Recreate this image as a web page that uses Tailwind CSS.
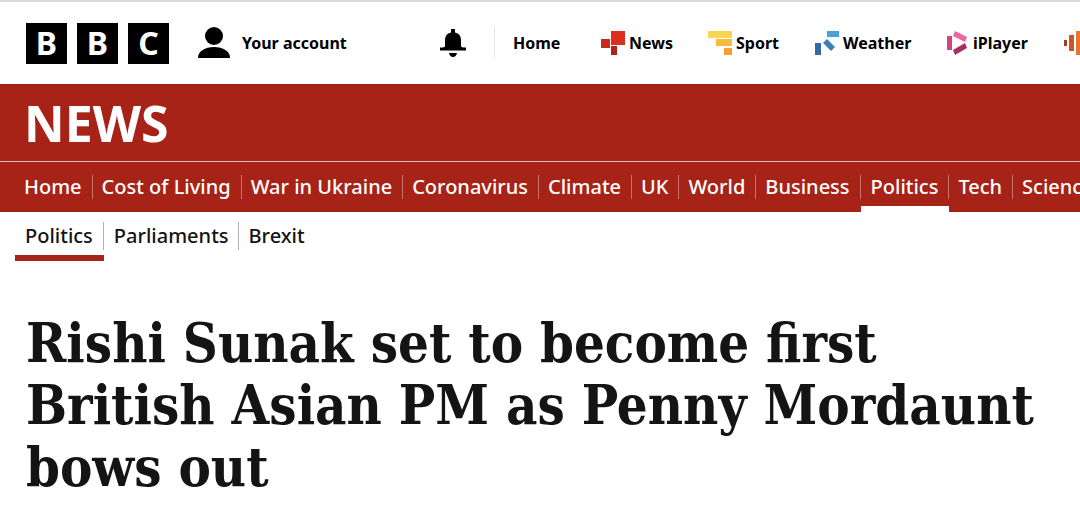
<!DOCTYPE html>
<html lang="en">
<head>
  <meta charset="UTF-8">
  <meta name="viewport" content="width=device-width, initial-scale=1.0">
  <title>Rishi Sunak set to become first British Asian PM - BBC News</title>
  <script src="https://cdn.jsdelivr.net/npm/@tailwindcss/browser@4"></script>
</head>
<body class="bg-white text-[#141414] font-['Noto_Sans',sans-serif] overflow-x-hidden">
  <header class="flex items-center h-21 border-t-2 border-[#dcdcdc] pl-[26px] overflow-hidden whitespace-nowrap text-black text-base font-bold">
    <a href="#" aria-label="BBC" class="flex shrink-0 gap-[10px] text-white text-[32px] leading-none">
      <span class="flex items-center justify-center size-[41px] bg-black">B</span>
      <span class="flex items-center justify-center size-[41px] bg-black">B</span>
      <span class="flex items-center justify-center size-[41px] bg-black">C</span>
    </a>
    <a href="#" class="flex shrink-0 items-center gap-3 ml-[29px] w-[242px]">
      <svg class="w-8 h-8" viewBox="0 0 32 32"><circle cx="16" cy="9" r="9"/><path d="M0 31C0 24 7 20 16 20s16 4 16 11z"/></svg>
      Your account
    </a>
    <button aria-label="Notifications" class="shrink-0 w-[26px] h-7">
      <svg class="w-[26px] h-7" viewBox="0 0 26 28"><path d="M11 0h4v3.500c4 .8 6 3.500 6 8v6l2 1h3v3H0v-3h3l2-1v-6c0-4.500 2-7.200 6-8zM9 24h8c-.5 2.500-2 4-4 4s-3.500-1.500-4-4z"/></svg>
    </button>
    <nav class="flex shrink-0 items-center h-8 ml-7 border-l border-[#e6e6e6]">
      <a href="#" class="w-[106px] pl-[18px]">Home</a>
      <a href="#" class="flex items-center gap-1 w-[107px]">
        <svg class="size-6" viewBox="0 0 24 24"><path fill="#db3020" d="M10 0h14v14H10z"/><path fill="#c72b1f" d="M0 8h9v9H0z"/><path fill="#ab251b" d="M10 15h6v9h-6z"/></svg>
        News
      </a>
      <a href="#" class="flex items-center gap-1 w-[107px]">
        <svg class="size-6" viewBox="0 0 24 24"><path fill="#f8d552" d="M0 0h24v7H0z"/><path fill="#f7b93e" d="M8 8h16v7H8z"/><path fill="#f4a233" d="M16 17h8v7h-8z"/></svg>
        Sport
      </a>
      <a href="#" class="flex items-center gap-1 w-[132px]">
        <svg class="size-6" viewBox="0 0 24 24"><path fill="#499fdc" d="M12 0h12v6H12z"/><path fill="#3a80b5" d="M12 8l8 8-4 4-8-8z"/><path fill="#3468a8" d="M0 12h6v12H0z"/></svg>
        Weather
      </a>
      <a href="#" class="flex items-center gap-[2px] w-[117px]">
        <svg class="size-6" viewBox="0 0 24 24"><path fill="#d34483" d="M0 5h5v14H0z"/><path fill="#ef65a3" d="M8 0l12 6-2 5L6 5z"/><path fill="#a92e65" d="M18 12l2 5-12 7-2-5z"/></svg>
        iPlayer
      </a>
      <a href="#" aria-label="Sounds">
        <svg class="size-6" viewBox="0 0 24 24"><path fill="#a3421a" d="M0 9h3v6H0z"/><path fill="#c9552a" d="M5 4h5v16H5z"/><path fill="#eb7331" d="M12 0h5v24h-5z"/></svg>
      </a>
    </nav>
  </header>

  <div class="bg-[#a82317] text-white">
    <div class="flex items-center h-[78px] px-6 border-b border-[#e3bcb8]">
      <a href="#" class="text-[50px] leading-none font-bold">NEWS</a>
    </div>
    <nav class="flex h-[50px] pl-[15px] overflow-hidden whitespace-nowrap text-xl font-medium leading-6">
      <a href="#" class="shrink-0 h-full py-[13px]"><span class="block pl-[9px] pr-[10px] border-r border-[#c9736b]">Home</span></a>
      <a href="#" class="shrink-0 h-full py-[13px]"><span class="block pl-[9px] pr-[10px] border-r border-[#c9736b]">Cost of Living</span></a>
      <a href="#" class="shrink-0 h-full py-[13px]"><span class="block pl-[9px] pr-[10px] border-r border-[#c9736b]">War in Ukraine</span></a>
      <a href="#" class="shrink-0 h-full py-[13px]"><span class="block pl-[9px] pr-[10px] border-r border-[#c9736b]">Coronavirus</span></a>
      <a href="#" class="shrink-0 h-full py-[13px]"><span class="block pl-[9px] pr-[10px] border-r border-[#c9736b]">Climate</span></a>
      <a href="#" class="shrink-0 h-full py-[13px]"><span class="block pl-[9px] pr-[10px] border-r border-[#c9736b]">UK</span></a>
      <a href="#" class="shrink-0 h-full py-[13px]"><span class="block pl-[9px] pr-[10px] border-r border-[#c9736b]">World</span></a>
      <a href="#" class="shrink-0 h-full py-[13px]"><span class="block pl-[9px] pr-[10px] border-r border-[#c9736b]">Business</span></a>
      <a href="#" aria-current="page" class="shrink-0 h-full pt-[13px] border-b-6 border-white"><span class="block px-[10px] border-r border-[#c9736b]">Politics</span></a>
      <a href="#" class="shrink-0 h-full py-[13px]"><span class="block pl-[9px] pr-[10px] border-r border-[#c9736b]">Tech</span></a>
      <a href="#" class="shrink-0 h-full py-[13px]"><span class="block pl-[9px] pr-[10px]">Science</span></a>
    </nav>
  </div>

  <nav class="flex pl-[15px] h-[49px] text-xl font-medium leading-7">
    <a href="#" aria-current="page" class="h-full pt-[10px] border-b-6 border-[#a82317]"><span class="block px-[10px] border-r border-[#b0b0b0]">Politics</span></a>
    <a href="#" class="pt-[10px]"><span class="block pl-[10px] pr-[9px] border-r border-[#b0b0b0]">Parliaments</span></a>
    <a href="#" class="pt-[10px]"><span class="block px-[10px]">Brexit</span></a>
  </nav>

  <main class="px-[26px] pt-[51px]">
    <h1 class="text-[54px] leading-[62px] font-bold font-['DejaVu_Serif_Condensed','DejaVu_Serif',serif]">Rishi Sunak set to become first British Asian PM as Penny Mordaunt bows out</h1>
  </main>
</body>
</html>
